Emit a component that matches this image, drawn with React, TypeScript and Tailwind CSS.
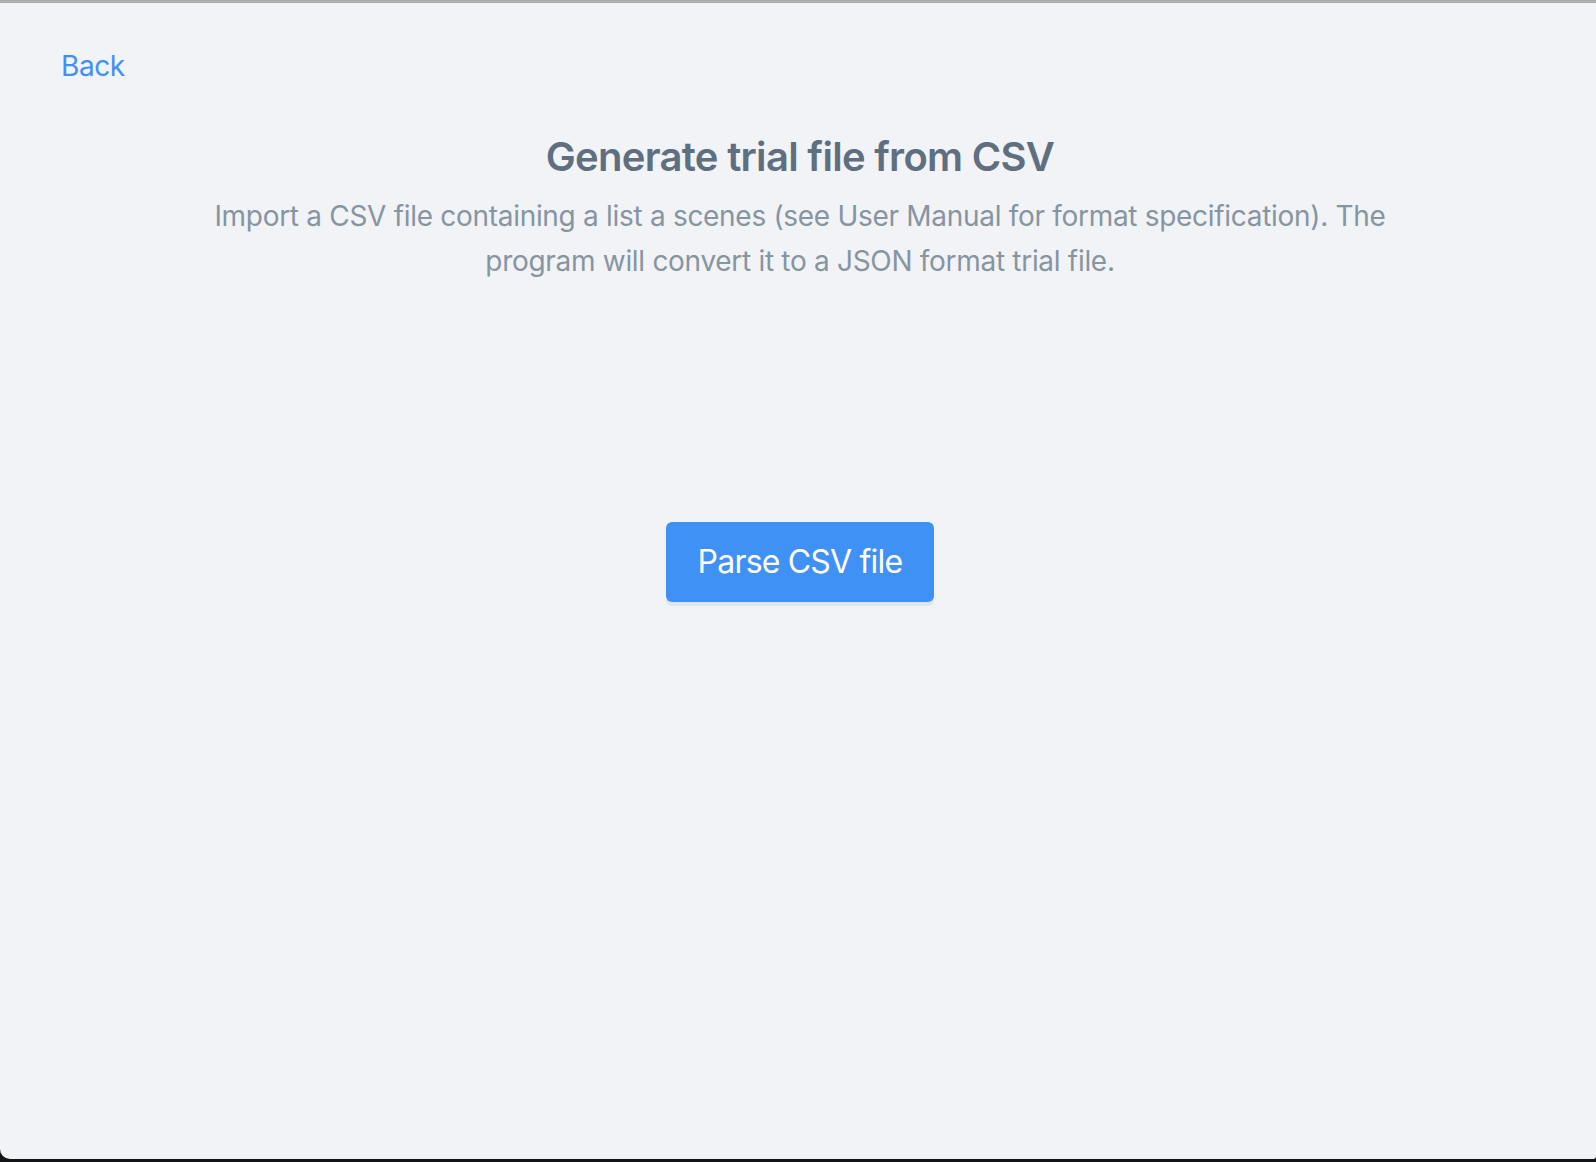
import React from "react";

export default function App() {
  return (
    <div className="h-[1162px] w-full bg-[#141414] flex flex-col overflow-hidden" style={{ fontFamily: "Inter, 'Noto Sans', sans-serif" }}>
      <div className="h-[3px] bg-gradient-to-b from-[#a0a0a0] to-[#bdbdbd] border-b border-[#a8a8a8]" />
      <div className="h-[1156px] bg-[#f1f3f7] rounded-bl-[10px] rounded-br-[3px] flex flex-col">
        <div className="pl-[61px] pt-[46px]">
          <a href="#" className="text-[28px] leading-[34px] tracking-[-0.4px] text-[#3f91f6]">Back</a>
        </div>
        <div className="mt-[50px] pl-[4px] text-center">
          <h1 className="text-[40px] leading-[48px] tracking-[-0.7px] font-semibold text-[#5f6f80]">Generate trial file from CSV</h1>
          <p className="mt-[13px] mx-auto max-w-[1200px] text-[28px] leading-[45px] tracking-[-0.3px] text-[#8795a1]">
            Import a CSV file containing a list a scenes (see User Manual for format specification). The program will convert it to a JSON format trial file.
          </p>
        </div>
        <div className="mt-[238px] pl-[4px] flex justify-center">
          <button className="w-[268px] h-[80px] rounded-[6px] bg-[#3f91f6] text-white text-[32px] leading-[40px] tracking-[-0.8px] shadow-[0_4px_0_#e2e4e9]">
            Parse CSV file
          </button>
        </div>
      </div>
    </div>
  );
}
